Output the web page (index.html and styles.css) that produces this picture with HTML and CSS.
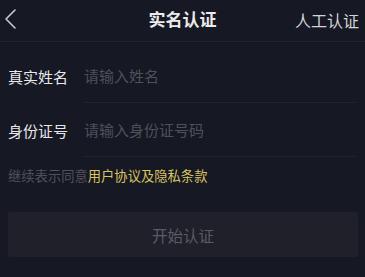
FILE: index.html
```html
<!DOCTYPE html>
<html lang="zh-CN">
<head>
<meta charset="utf-8">
<title>实名认证</title>
<link rel="stylesheet" href="styles.css">
</head>
<body>
<div class="page">
  <header class="header">
    <span class="back">
      <svg width="14" height="22" viewBox="0 0 14 22"><path d="M11 2 L2 11 L11 20" fill="none" stroke="#c9c9cd" stroke-width="1.6" stroke-linecap="round" stroke-linejoin="round"/></svg>
    </span>
    <h1 class="title">实名认证</h1>
    <span class="manual">人工认证</span>
  </header>
  <div class="form">
    <div class="row">
      <span class="label">真实姓名</span>
      <div class="field"><span class="placeholder">请输入姓名</span></div>
    </div>
    <div class="row">
      <span class="label">身份证号</span>
      <div class="field"><span class="placeholder">请输入身份证号码</span></div>
    </div>
    <p class="agree">继续表示同意<span class="link">用户协议及隐私条款</span></p>
    <div class="btn">开始认证</div>
  </div>
</div>
</body>
</html>
```
FILE: styles.css
```css
html, body {
  margin: 0;
  padding: 0;
  background: #161823;
}
.page {
  width: 365px;
  height: 277px;
  background: #161823;
  font-family: "Noto Sans CJK SC", "Noto Sans", sans-serif;
  color: #e6e6e9;
  overflow: hidden;
}
.header {
  height: 37px;
  padding-bottom: 4px;
  border-bottom: 1px solid #20222c;
  display: flex;
  align-items: center;
  justify-content: space-between;
  position: relative;
}
.back {
  display: flex;
  margin-left: 4px;
  margin-top: 1px;
}
.title {
  margin: 0;
  font-size: 17px;
  font-weight: 600;
  color: #ebebed;
  position: absolute;
  left: 0;
  right: 0;
  text-align: center;
  line-height: 37px;
  top: 0;
}
.manual {
  font-size: 16px;
  color: #d4d4d8;
  margin-right: 6px;
  margin-top: 3px;
}
.form {
  padding: 7px 0 0 8px;
}
.row {
  display: flex;
  height: 54px;
  align-items: center;
}
.label {
  width: 76px;
  font-size: 15px;
  color: #e8e8ea;
}
.field {
  flex: 1;
  align-self: stretch;
  margin-right: 10px;
  display: flex;
  align-items: center;
  border-bottom: 1px solid #22242e;
}
.placeholder {
  font-size: 15px;
  color: #4f505a;
}
.agree {
  margin: 9px 0 0 0;
  font-size: 13.3px;
  line-height: 20px;
  color: #50515b;
}
.link {
  color: #d8c462;
}
.btn {
  margin-top: 26px;
  width: 350px;
  height: 45px;
  border-radius: 2px;
  background: #1f2029;
  display: flex;
  align-items: center;
  justify-content: center;
  font-size: 15.5px;
  color: #5a5b65;
}
```
